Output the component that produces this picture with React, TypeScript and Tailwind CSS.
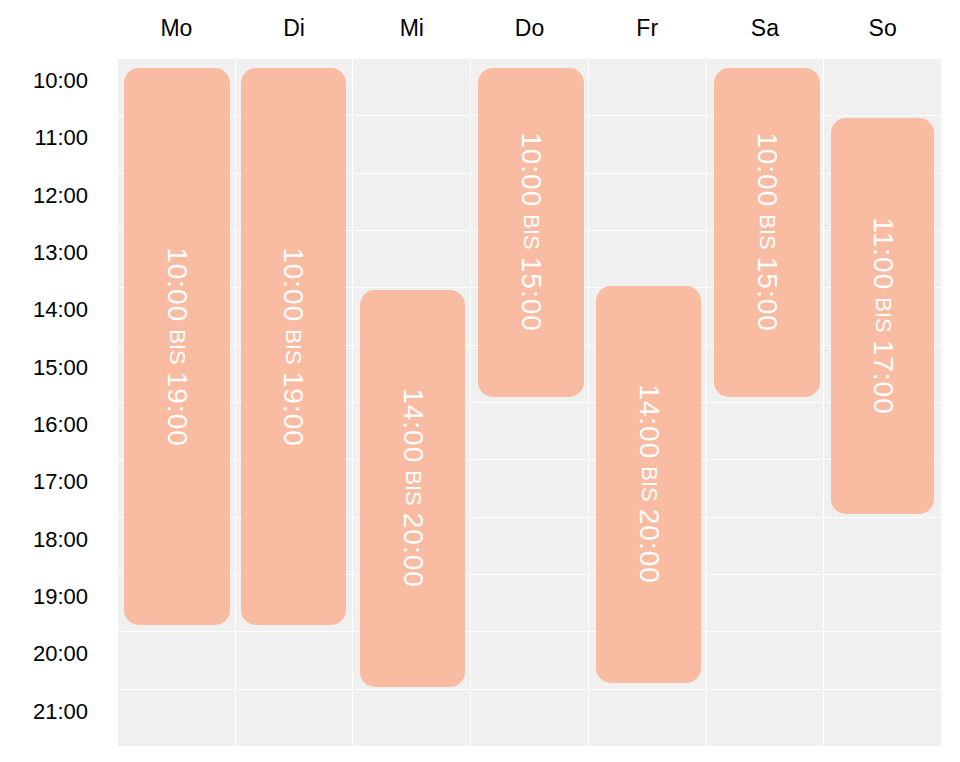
import React from "react";

const days = ["Mo", "Di", "Mi", "Do", "Fr", "Sa", "So"];
const hours = ["10:00", "11:00", "12:00", "13:00", "14:00", "15:00", "16:00", "17:00", "18:00", "19:00", "20:00", "21:00"];

const colStart = ["col-start-1", "col-start-2", "col-start-3", "col-start-4", "col-start-5", "col-start-6", "col-start-7"];
const rowStart = ["row-start-1", "row-start-2", "row-start-3", "row-start-4", "row-start-5", "row-start-6", "row-start-7", "row-start-8", "row-start-9", "row-start-10", "row-start-11", "row-start-12"];

type Ev = { from: string; to: string; cls: string };

const events: Ev[] = [
  { from: "10:00", to: "19:00", cls: "col-start-1 row-start-1 row-span-10 mt-[9px] mb-[6px] ml-[6px] w-[106px]" },
  { from: "10:00", to: "19:00", cls: "col-start-2 row-start-1 row-span-10 mt-[9px] mb-[6px] ml-[5px] w-[105px]" },
  { from: "14:00", to: "20:00", cls: "col-start-3 row-start-5 row-span-7 mt-[2px] mb-[2px] ml-[7px] w-[105px]" },
  { from: "10:00", to: "15:00", cls: "col-start-4 row-start-1 row-span-6 mt-[9px] mb-[5px] ml-[7px] w-[106px]" },
  { from: "14:00", to: "20:00", cls: "col-start-5 row-start-5 row-span-7 -mt-[2.5px] mb-[6px] ml-[7px] w-[105px]" },
  { from: "10:00", to: "15:00", cls: "col-start-6 row-start-1 row-span-6 mt-[9px] mb-[5px] ml-[7px] w-[106px]" },
  { from: "11:00", to: "17:00", cls: "col-start-7 row-start-2 row-span-7 mt-[2px] mb-[3px] ml-[7px] w-[103px]" },
];

export default function App() {
  return (
    <div className="w-[960px] h-[762px] bg-white font-['Liberation_Sans',Arial,sans-serif] text-black">
      <div className="flex h-[59px]">
        <div className="w-[118px]" />
        <div className="grid grid-cols-7 w-[823px] gap-px">
          {days.map((d) => (
            <div key={d} className="flex items-center justify-center pb-[2px] text-[23px]">
              {d}
            </div>
          ))}
        </div>
      </div>
      <div className="flex">
        <div className="w-[118px] grid grid-rows-[repeat(12,1fr)] h-[687px] gap-px">
          {hours.map((h) => (
            <div key={h} className="text-right pr-[30px] pt-[5px] text-[22px] leading-normal">
              {h}
            </div>
          ))}
        </div>
        <div className="grid grid-cols-7 grid-rows-[repeat(12,1fr)] w-[823px] h-[687px] gap-px bg-white">
          {hours.map((h, r) =>
            days.map((d, c) => (
              <div key={h + d} className={`${colStart[c]} ${rowStart[r]} bg-[#f0f0f0]`} />
            ))
          )}
          {events.map((e, i) => (
            <div
              key={i}
              className={`${e.cls} rounded-[15px] bg-[#f9bba1] flex items-center justify-center overflow-visible`}
            >
              <div className="rotate-90 flex items-center whitespace-nowrap text-white shrink-0 font-['Liberation_Sans',Arial,sans-serif]">
                <span className="text-[28px] leading-none tracking-[1px]">{e.from}</span>
                <span className="text-[22px] leading-none mx-[7px]">BIS</span>
                <span className="text-[28px] leading-none tracking-[1px]">{e.to}</span>
              </div>
            </div>
          ))}
        </div>
      </div>
    </div>
  );
}
